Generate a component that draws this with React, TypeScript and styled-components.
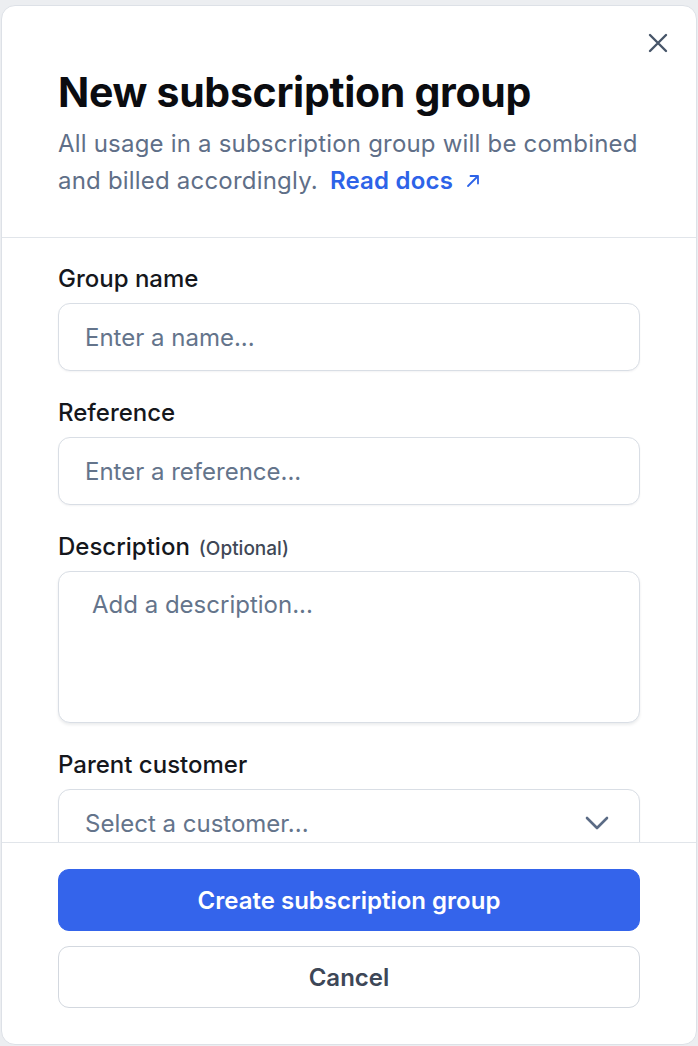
import React from "react";
import styled, { createGlobalStyle } from "styled-components";

const GlobalStyle = createGlobalStyle`
  html, body {
    margin: 0;
    padding: 0;
    background: #eceef1;
    font-family: Inter, "Noto Sans", sans-serif;
    -webkit-font-smoothing: antialiased;
  }
  * { box-sizing: border-box; }
`;

const Page = styled.div`
  padding: 5px 1px 0;
  height: 1046px;
  overflow: hidden;
`;

const Card = styled.div`
  position: relative;
  height: 1040px;
  background: #fff;
  border: 1.5px solid #dde1e7;
  border-radius: 14px;
  display: flex;
  flex-direction: column;
  overflow: hidden;
`;

const Header = styled.header`
  padding: 62px 56px 38px;
  border-bottom: 1.5px solid #e1e5ea;
`;

const CloseButton = styled.button`
  position: absolute;
  top: 20px;
  right: 21px;
  width: 34px;
  height: 34px;
  border: none;
  background: transparent;
  padding: 0;
  display: flex;
  align-items: center;
  justify-content: center;
  cursor: pointer;
`;

const Title = styled.h1`
  margin: 0 0 9px;
  font-size: 41px;
  line-height: 48px;
  font-weight: 700;
  letter-spacing: -0.3px;
  color: #0b0c10;
`;

const Subtitle = styled.p`
  margin: 0;
  font-size: 24px;
  line-height: 37px;
  letter-spacing: 0.2px;
  color: #5f6f88;
`;

const DocsLink = styled.a`
  margin-left: 12px;
  color: #2d63e8;
  font-weight: 600;
  text-decoration: none;
  display: inline-flex;
  align-items: center;
  gap: 13px;
`;

const Body = styled.div`
  flex: 1;
  min-height: 0;
  overflow: hidden;
  padding: 27px 56px 0;
  display: flex;
  flex-direction: column;
  gap: 28px;
`;

const Field = styled.div`
  display: flex;
  flex-direction: column;
  gap: 10px;
`;

const Label = styled.label`
  height: 28px;
  display: flex;
  align-items: baseline;
  font-size: 24px;
  line-height: 28px;
  font-weight: 500;
  color: #15171c;
`;

const Optional = styled.span`
  margin-left: 9px;
  font-size: 19px;
  font-weight: 500;
  color: #3f4856;
`;

const inputBase = `
  width: 100%;
  border: 1.5px solid #d9dee5;
  border-radius: 12px;
  background: #fff;
  font-family: Inter, "Noto Sans", sans-serif;
  font-size: 24px;
  color: #15171c;
  box-shadow: 0 1px 2px rgba(16, 24, 40, 0.05);
  outline: none;
  &::placeholder { color: #64748b; }
`;

const TextInput = styled.input`
  ${inputBase}
  height: 68px;
  padding: 0 26px;
`;

const TextArea = styled.textarea`
  ${inputBase}
  height: 152px;
  padding: 16px 33px;
  line-height: 34px;
  resize: none;
  box-shadow: 0 2px 3px rgba(16, 24, 40, 0.08);
`;

const SelectBox = styled.div`
  ${inputBase}
  flex-shrink: 0;
  height: 68px;
  padding: 0 30px 0 26px;
  display: flex;
  align-items: center;
  justify-content: space-between;
  color: #64748b;
`;

const Footer = styled.footer`
  border-top: 1.5px solid #e1e5ea;
  padding: 26px 56px 36px;
  display: flex;
  flex-direction: column;
  gap: 15px;
`;

const Button = styled.button<{ $primary?: boolean }>`
  height: 62px;
  border-radius: 11px;
  font-family: Inter, "Noto Sans", sans-serif;
  font-size: 24px;
  font-weight: 600;
  cursor: pointer;
  border: 1.5px solid ${(p) => (p.$primary ? "#3464eb" : "#d3d8df")};
  background: ${(p) => (p.$primary ? "#3464eb" : "#fff")};
  color: ${(p) => (p.$primary ? "#fff" : "#3d4757")};
`;

const CloseIcon = () => (
  <svg width="20" height="20" viewBox="0 0 20 20" fill="none">
    <path d="M2 2L18 18M18 2L2 18" stroke="#475569" strokeWidth="2.4" strokeLinecap="round" />
  </svg>
);

const ArrowUpRight = () => (
  <svg width="14" height="14" viewBox="0 0 14 14" fill="none">
    <path d="M2 12L12 2M4.5 2H12V9.5" stroke="#2d63e8" strokeWidth="1.8" strokeLinecap="round" strokeLinejoin="round" />
  </svg>
);

const Chevron = () => (
  <svg width="24" height="14" viewBox="0 0 24 14" fill="none">
    <path d="M2 2L12 12L22 2" stroke="#5b6b85" strokeWidth="2.6" strokeLinecap="round" strokeLinejoin="round" />
  </svg>
);

export default function App() {
  return (
    <Page>
      <GlobalStyle />
      <Card>
        <CloseButton aria-label="Close">
          <CloseIcon />
        </CloseButton>
        <Header>
          <Title>New subscription group</Title>
          <Subtitle>
            All usage in a subscription group will be combined and billed accordingly.
            <DocsLink href="#">
              Read docs
              <ArrowUpRight />
            </DocsLink>
          </Subtitle>
        </Header>
        <Body>
          <Field>
            <Label>Group name</Label>
            <TextInput placeholder="Enter a name..." />
          </Field>
          <Field>
            <Label>Reference</Label>
            <TextInput placeholder="Enter a reference..." />
          </Field>
          <Field>
            <Label>
              Description<Optional>(Optional)</Optional>
            </Label>
            <TextArea placeholder="Add a description..." />
          </Field>
          <Field>
            <Label>Parent customer</Label>
            <SelectBox>
              <span>Select a customer...</span>
              <Chevron />
            </SelectBox>
          </Field>
        </Body>
        <Footer>
          <Button $primary>Create subscription group</Button>
          <Button>Cancel</Button>
        </Footer>
      </Card>
    </Page>
  );
}
